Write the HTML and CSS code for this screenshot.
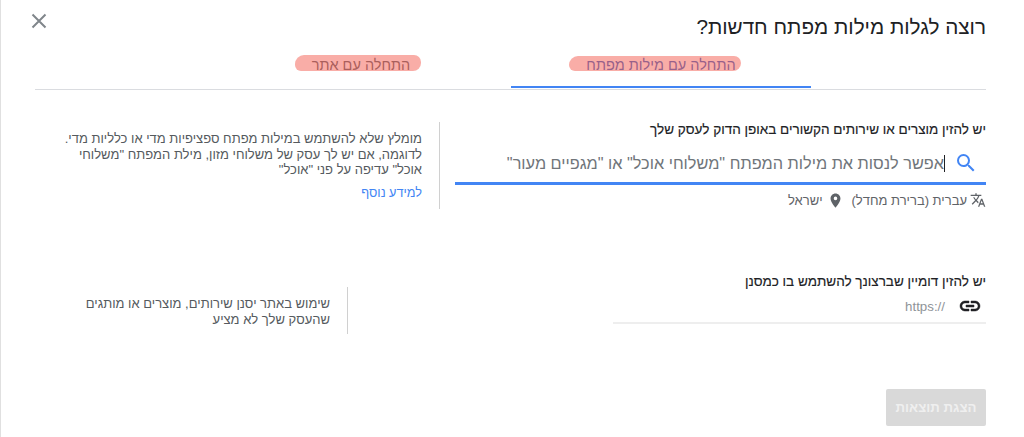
FILE: index.html
```html
<!DOCTYPE html>
<html lang="he" dir="rtl">
<head>
    <meta charset="UTF-8">
    <meta name="viewport" content="width=device-width, initial-scale=1.0">
    <title>Keyword ideas</title>
    <link rel="stylesheet" href="styles.css">
</head>
<body>
    <div class="dialog">
        <header class="dialog-header">
            <h1>רוצה לגלות מילות מפתח חדשות?</h1>
            <button class="close-button" aria-label="סגירה">
                <svg width="24" height="24" viewBox="0 0 24 24"><path d="M5.5 5.5l13 13M18.5 5.5l-13 13" fill="none" stroke="#80868b" stroke-width="2"/></svg>
            </button>
        </header>

        <nav class="tabs">
            <div class="tab tab-active"><span class="tab-label marker-first">התחלה עם מילות מפתח</span></div>
            <div class="tab"><span class="tab-label marker-second">התחלה עם אתר</span></div>
        </nav>

        <section class="row row-keywords">
            <div class="field field-keywords">
                <label class="field-label">יש להזין מוצרים או שירותים הקשורים באופן הדוק לעסק שלך</label>
                <div class="search-input">
                    <svg class="search-icon" width="24" height="24" viewBox="0 0 24 24"><path d="M15.5 14h-.79l-.28-.27A6.47 6.47 0 0 0 16 9.5 6.5 6.5 0 1 0 9.5 16c1.61 0 3.09-.59 4.23-1.57l.27.28v.79l5 4.99L20.49 19l-4.99-5zm-6 0C7.01 14 5 11.99 5 9.5S7.01 5 9.5 5 14 7.01 14 9.5 11.99 14 9.5 14z" fill="#4285f4"/></svg>
                    <span class="caret"></span>
                    <span class="placeholder">אפשר לנסות את מילות המפתח "משלוחי אוכל" או "מגפיים מעור"</span>
                </div>
                <div class="locale">
                    <svg width="16" height="16" viewBox="0 0 24 24"><path d="M12.87 15.07l-2.54-2.51.03-.03A17.52 17.52 0 0 0 14.07 6H17V4h-7V2H8v2H1v2h11.17C11.5 7.92 10.44 9.75 9 11.35 8.07 10.32 7.3 9.19 6.69 8h-2c.73 1.63 1.73 3.17 2.98 4.56l-5.09 5.02L4 19l5-5 3.11 3.11.76-2.04zM18.5 10h-2L12 22h2l1.12-3h4.75L21 22h2l-4.5-12zm-2.62 7l1.62-4.33L19.12 17h-3.24z" fill="#5f6368"/></svg>
                    <span>עברית (ברירת מחדל)</span>
                    <svg class="pin" width="17" height="17" viewBox="0 0 24 24"><path d="M12 2C8.13 2 5 5.13 5 9c0 5.25 7 13 7 13s7-7.75 7-13c0-3.87-3.13-7-7-7zm0 9.5a2.5 2.5 0 1 1 0-5 2.5 2.5 0 0 1 0 5z" fill="#5f6368"/></svg>
                    <span>ישראל</span>
                </div>
            </div>
            <aside class="hint hint-keywords">
                <p>מומלץ שלא להשתמש במילות מפתח ספציפיות מדי או כלליות מדי. לדוגמה, אם יש לך עסק של משלוחי מזון, מילת המפתח "משלוחי אוכל" עדיפה על פני "אוכל"</p>
                <a class="more-link" href="#">למידע נוסף</a>
            </aside>
        </section>

        <section class="row row-domain">
            <div class="field field-domain">
                <label class="field-label">יש להזין דומיין שברצונך להשתמש בו כמסנן</label>
                <div class="domain-input">
                    <svg width="24" height="24" viewBox="0 0 24 24"><path d="M3.9 12c0-1.71 1.39-3.1 3.1-3.1h4V7H7c-2.76 0-5 2.24-5 5s2.24 5 5 5h4v-1.9H7c-1.71 0-3.1-1.39-3.1-3.1zM8 13h8v-2H8v2zm9-6h-4v1.9h4c1.71 0 3.1 1.39 3.1 3.1s-1.39 3.1-3.1 3.1h-4V17h4c2.76 0 5-2.24 5-5s-2.24-5-5-5z" fill="#202124" stroke="#202124" stroke-width="0.5"/></svg>
                    <span class="https" dir="ltr">https://</span>
                </div>
            </div>
            <aside class="hint hint-domain">
                <p>שימוש באתר יסנן שירותים, מוצרים או מותגים שהעסק שלך לא מציע</p>
            </aside>
        </section>

        <footer class="dialog-footer">
            <button class="results-button" disabled>הצגת תוצאות</button>
        </footer>
    </div>
</body>
</html>
```

FILE: styles.css
```css
:root {
    --blue: #4285f4;
    --line: #dadce0;
    --text: #202124;
    --muted: #5f6368;
}

* {
    margin: 0;
    padding: 0;
    box-sizing: border-box;
    font-family: 'Liberation Sans', Arial, sans-serif;
}

body {
    background-color: white;
    color: var(--text);
    overflow: hidden;
}

.dialog {
    height: 437px;
    padding: 0 38px 0 34px;
    border-left: 1px solid #e0e0e0;
}

.dialog-header {
    display: flex;
    justify-content: space-between;
    align-items: flex-start;
    height: 48px;
}

h1 {
    font-size: 20.7px;
    font-weight: 400;
    line-height: 24px;
    margin-top: 15px;
}

.close-button {
    background: none;
    border: none;
    width: 24px;
    height: 24px;
    margin-top: 9px;
    margin-left: -8px;
}

.tabs {
    display: flex;
    height: 42px;
    border-bottom: 1px solid var(--line);
}

.tab {
    width: 300px;
    height: 40px;
    padding-top: 9px;
    text-align: center;
    font-size: 14.5px;
    line-height: 16px;
    color: var(--muted);
}

.tab-active {
    margin-right: 175px;
    color: #3b66c4;
    border-bottom: 2px solid var(--blue);
}

.tab-label {
    position: relative;
    display: inline-block;
}

/* marker scribble drawn over the tab names */
.tab-label::after {
    content: "";
    position: absolute;
    background-color: rgba(244, 92, 80, 0.5);
    border-radius: 9px 7px 8px 6px;
}

.marker-first::after {
    top: -1px;
    bottom: 2px;
    left: -17px;
    right: -5px;
}

.marker-second::after {
    top: -2px;
    bottom: 2px;
    left: -17px;
    right: -11px;
}

.row {
    display: flex;
}

.row-keywords {
    margin-top: 32px;
    height: 87px;
}

.row-domain {
    margin-top: 65px;
    height: 65px;
}

.field-label {
    display: block;
    font-size: 13.5px;
    line-height: 16px;
    font-weight: 400;
    color: #202124;
    -webkit-text-stroke: 0.15px #202124;
}

.field-keywords {
    width: 531px;
}

.search-input {
    display: flex;
    align-items: center;
    height: 47px;
    padding-top: 6px;
    border-bottom: 3px solid var(--blue);
    white-space: nowrap;
    overflow: hidden;
}

.search-icon {
    flex: none;
    margin-right: 8px;
    margin-left: 9px;
}

.caret {
    flex: none;
    width: 1px;
    height: 17px;
    background-color: var(--text);
}

.placeholder {
    font-size: 16.3px;
    color: #70757a;
}

.locale {
    display: flex;
    align-items: center;
    gap: 3px;
    height: 16px;
    margin-top: 7px;
    font-size: 13px;
    color: var(--muted);
}

.pin {
    margin-right: 5px;
    margin-left: 1px;
}

.hint {
    border-right: 1px solid #d0d0d0;
    font-size: 13px;
    color: #555a5e;
    padding-right: 17px;
    padding-top: 9px;
}

.hint-keywords {
    width: 404px;
    margin-right: 15px;
    line-height: 15.6px;
}

.hint-keywords p {
    max-width: 362px;
}

.more-link {
    display: block;
    margin-top: 8px;
    color: var(--blue);
    text-decoration: none;
    font-size: 12.7px;
}

.field-domain {
    width: 373px;
}

.domain-input {
    display: flex;
    align-items: center;
    gap: 13px;
    height: 34px;
    border-bottom: 2px solid #eeeeee;
}

.domain-input svg {
    margin-right: 4px;
}

.https {
    font-size: 13.3px;
    color: #8f9498;
}

.hint-domain {
    width: 270px;
    height: 47px;
    margin-right: 265px;
    margin-top: 13px;
    line-height: 16px;
}

.dialog-footer {
    display: flex;
    margin-top: 50px;
}

.results-button {
    width: 100px;
    height: 37px;
    background-color: #d9d9d9;
    color: #efefef;
    border: none;
    border-radius: 2px;
    font-size: 13.3px;
    font-weight: 700;
}
```
